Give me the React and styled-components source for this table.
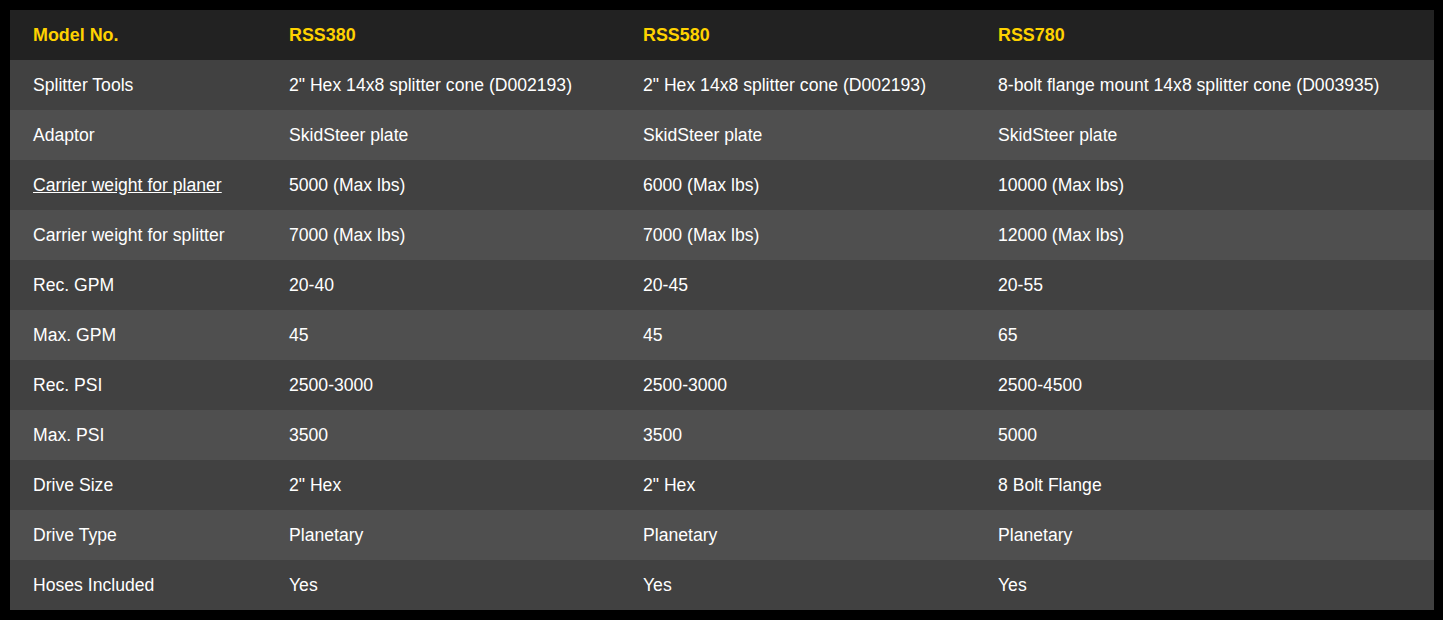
import React from "react";
import styled, { createGlobalStyle } from "styled-components";

const Global = createGlobalStyle`
  html, body { margin: 0; padding: 0; background: #000; }
  body { font-family: "Liberation Sans", Arial, sans-serif; }
`;

const Page = styled.div`
  padding: 10px 9px 10px 10px;
  background: #000;
`;

const Table = styled.table`
  width: 1424px;
  border-collapse: collapse;
  table-layout: fixed;
  font-family: "Liberation Sans", Arial, sans-serif;
  font-size: 17.6px;
`;

const HeadRow = styled.tr`
  background: #222222;
  height: 50px;
`;

const HeadCell = styled.th`
  text-align: left;
  font-weight: bold;
  font-size: 17.9px;
  color: #ffd200;
  padding: 0 0 0 23px;
  height: 50px;
  box-sizing: border-box;
  vertical-align: middle;
`;

const Row = styled.tr`
  background: ${(p) => (p.$alt ? "#4f4f4f" : "#414141")};
  height: 50px;
`;

const Cell = styled.td`
  color: #ffffff;
  padding: 0 0 0 23px;
  height: 50px;
  box-sizing: border-box;
  vertical-align: middle;
  white-space: nowrap;
`;

const Link = styled.a`
  color: #ffffff;
  text-decoration: underline;
`;

const rows = [
  ["Splitter Tools", '2" Hex 14x8 splitter cone (D002193)', '2" Hex 14x8 splitter cone (D002193)', "8-bolt flange mount 14x8 splitter cone (D003935)"],
  ["Adaptor", "SkidSteer plate", "SkidSteer plate", "SkidSteer plate"],
  ["Carrier weight for planer", "5000 (Max lbs)", "6000 (Max lbs)", "10000 (Max lbs)", true],
  ["Carrier weight for splitter", "7000 (Max lbs)", "7000 (Max lbs)", "12000 (Max lbs)"],
  ["Rec. GPM", "20-40", "20-45", "20-55"],
  ["Max. GPM", "45", "45", "65"],
  ["Rec. PSI", "2500-3000", "2500-3000", "2500-4500"],
  ["Max. PSI", "3500", "3500", "5000"],
  ["Drive Size", '2" Hex', '2" Hex', "8 Bolt Flange"],
  ["Drive Type", "Planetary", "Planetary", "Planetary"],
  ["Hoses Included", "Yes", "Yes", "Yes"],
];

export default function App() {
  return (
    <>
      <Global />
      <Page>
        <Table>
          <colgroup>
            <col style={{ width: 256 }} />
            <col style={{ width: 354 }} />
            <col style={{ width: 355 }} />
            <col style={{ width: 459 }} />
          </colgroup>
          <thead>
            <HeadRow>
              <HeadCell>Model No.</HeadCell>
              <HeadCell>RSS380</HeadCell>
              <HeadCell>RSS580</HeadCell>
              <HeadCell>RSS780</HeadCell>
            </HeadRow>
          </thead>
          <tbody>
            {rows.map((r, i) => (
              <Row key={i} $alt={i % 2 === 1}>
                <Cell>{r[4] ? <Link href="#">{r[0]}</Link> : r[0]}</Cell>
                <Cell>{r[1]}</Cell>
                <Cell>{r[2]}</Cell>
                <Cell>{r[3]}</Cell>
              </Row>
            ))}
          </tbody>
        </Table>
      </Page>
    </>
  );
}
